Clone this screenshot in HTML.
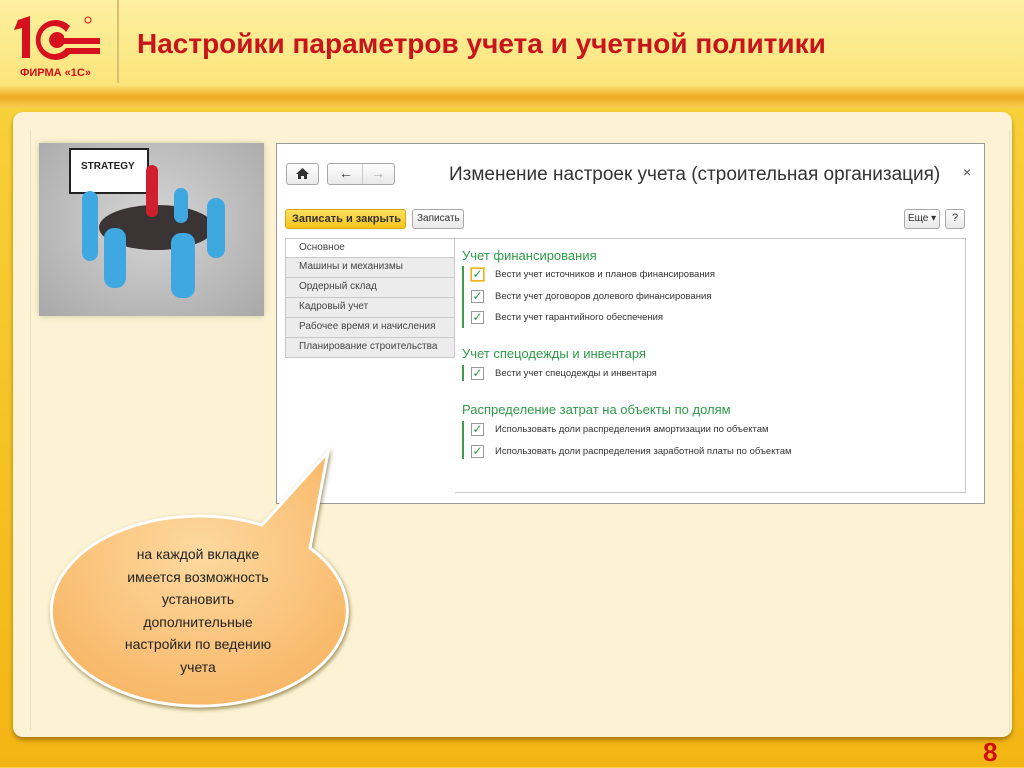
<!DOCTYPE html>
<html><head><meta charset="utf-8"><style>
*{margin:0;padding:0;box-sizing:border-box}
body{width:1024px;height:767px;overflow:hidden;position:relative;font-family:"Liberation Sans",sans-serif;background:linear-gradient(#f8d440,#f3b514)}
.hdr{position:absolute;left:0;top:0;width:1024px;height:88px;background:linear-gradient(#fdf0a0,#fbe47a)}
.band{position:absolute;left:0;top:86px;width:1024px;height:22px;background:linear-gradient(#f9df70,#eeaa20 50%,#f6cf50)}
.title{position:absolute;left:137px;top:28px;font-size:28px;font-weight:bold;color:#c8141c;white-space:nowrap}
.vsep{position:absolute;left:117px;top:0;width:2px;height:83px;background:#d8c070}
.panel{position:absolute;left:13px;top:112px;width:999px;height:625px;background:#fdf3d4;border-radius:10px;box-shadow:0 3px 4px rgba(120,80,0,.6)}
.inner{position:absolute;left:30px;top:130px;width:980px;height:600px;border-left:1px solid #e8dfc4;border-right:1px solid #e8dfc4}
.pic{position:absolute;left:39px;top:143px;width:225px;height:173px;background:radial-gradient(ellipse at 50% 45%,#d6d6d6,#a8a8a8);box-shadow:0 0 6px #c8c8a0}
.win{position:absolute;left:276px;top:143px;width:709px;height:361px;background:#fff;border:1px solid #9a9a9a}
.btn{position:absolute;border:1px solid #a8a8a8;border-radius:3px;background:linear-gradient(#fff,#e8e8e8);font-size:11px;color:#333}
.tabs{position:absolute;left:8px;top:94px;width:170px}
.tab{height:20px;border:1px solid #c8c8c8;border-top:none;background:#ececec;font-size:10px;color:#444;padding:3px 0 0 13px}
.tab.a{background:#fff;border-top:1px solid #c8c8c8}
.g{position:absolute;font-size:13px;color:#2e9a4a}
.cb{position:absolute;font-size:9.5px;color:#333}
.cb i{position:absolute;left:-24px;top:-1px;width:13px;height:13px;border:1px solid #999;background:#fff;font-style:normal;color:#2a9a40;font-size:12px;line-height:11px;text-align:center}
.bar{position:absolute;width:2px;background:#3aa050}
.num{position:absolute;left:983px;top:737px;font-size:26px;font-weight:bold;color:#d01010}
</style></head><body>
<div class="hdr"></div><div class="band"></div><div class="vsep"></div>
<svg style="position:absolute;left:10px;top:12px" width="100" height="70">
<path d="M8 8 L20 4 L20 46 L12 46 L12 16 L4 18 Z" fill="#d6101e"/>
<path d="M60 14 A20 20 0 1 0 60 42 L90 42 L90 36 L56 36 A14 14 0 1 1 56 20 Z" fill="#d6101e"/>
<path d="M54 24 A8 8 0 1 0 54 32 L90 32 L90 26 L54 26Z" fill="#d6101e"/>
<circle cx="78" cy="8" r="3" fill="none" stroke="#d6101e"/>
<text x="10" y="64" font-size="11" font-weight="bold" fill="#d6101e" font-family="Liberation Sans">ФИРМА «1С»</text>
</svg>
<div class="title">Настройки параметров учета и учетной политики</div>
<div class="panel"></div><div class="inner"></div>
<div class="pic">
<div style="position:absolute;left:30px;top:5px;width:80px;height:46px;background:#fff;border:2px solid #222"></div>
<div style="position:absolute;left:42px;top:18px;font-size:10px;font-weight:bold;color:#222">STRATEGY</div>
<div style="position:absolute;left:60px;top:62px;width:115px;height:45px;border-radius:50%;background:#3a3434"></div>
<div style="position:absolute;left:107px;top:22px;width:12px;height:52px;background:#d02030;border-radius:6px"></div>
<div style="position:absolute;left:43px;top:48px;width:16px;height:70px;background:#40a8e0;border-radius:8px"></div>
<div style="position:absolute;left:65px;top:85px;width:22px;height:60px;background:#40a8e0;border-radius:10px"></div>
<div style="position:absolute;left:132px;top:90px;width:24px;height:65px;background:#40a8e0;border-radius:10px"></div>
<div style="position:absolute;left:168px;top:55px;width:18px;height:60px;background:#40a8e0;border-radius:9px"></div>
<div style="position:absolute;left:135px;top:45px;width:14px;height:35px;background:#40a8e0;border-radius:7px"></div>
</div>
<div class="win">
<div class="btn" style="left:9px;top:19px;width:33px;height:22px"><svg width="31" height="20"><path d="M15.5 4 L22 10 L20 10 L20 15 L17 15 L17 12 L14 12 L14 15 L11 15 L11 10 L9 10 Z" fill="#333"/></svg></div>
<div class="btn" style="left:50px;top:19px;width:68px;height:22px;font-size:14px;line-height:19px"><span style="position:absolute;left:11px">←</span><span style="position:absolute;left:34px;top:0;height:20px;border-left:1px solid #ccc"></span><span style="position:absolute;left:43px;color:#aaa">→</span></div>
<div style="position:absolute;left:172px;top:20px;font-size:19px;color:#333;white-space:nowrap">Изменение настроек учета (строительная организация)</div>
<div style="position:absolute;left:686px;top:20px;font-size:14px;color:#555">×</div>
<div class="btn" style="left:8px;top:65px;width:121px;height:20px;background:linear-gradient(#ffe060,#f5c418);border-color:#d8a810;font-weight:bold;padding:3px 0 0 6px">Записать и закрыть</div>
<div class="btn" style="left:135px;top:65px;width:52px;height:20px;padding:3px 0 0 4px;font-size:10px">Записать</div>
<div class="btn" style="left:627px;top:65px;width:36px;height:20px;padding:3px 0 0 3px;font-size:10px">Еще ▾</div>
<div class="btn" style="left:668px;top:65px;width:20px;height:20px;text-align:center;padding-top:2px">?</div>
<div style="position:absolute;left:178px;top:94px;width:511px;height:255px;border:1px solid #c8c8c8;border-left:none"></div>
<div class="tabs">
<div class="tab a">Основное</div><div class="tab">Машины и механизмы</div><div class="tab">Ордерный склад</div><div class="tab">Кадровый учет</div><div class="tab">Рабочее время и начисления</div><div class="tab">Планирование строительства</div>
</div>
<div class="g" style="left:185px;top:104px">Учет финансирования</div>
<div class="bar" style="left:185px;top:122px;height:62px"></div>
<div class="cb" style="left:218px;top:125px"><i style="border-color:#f0b020;outline:1px solid #f8d060">✓</i>Вести учет источников и планов финансирования</div>
<div class="cb" style="left:218px;top:147px"><i>✓</i>Вести учет договоров долевого финансирования</div>
<div class="cb" style="left:218px;top:168px"><i>✓</i>Вести учет гарантийного обеспечения</div>
<div class="g" style="left:185px;top:202px">Учет спецодежды и инвентаря</div>
<div class="bar" style="left:185px;top:221px;height:16px"></div>
<div class="cb" style="left:218px;top:224px"><i>✓</i>Вести учет спецодежды и инвентаря</div>
<div class="g" style="left:185px;top:258px">Распределение затрат на объекты по долям</div>
<div class="bar" style="left:185px;top:277px;height:38px"></div>
<div class="cb" style="left:218px;top:280px"><i>✓</i>Использовать доли распределения амортизации по объектам</div>
<div class="cb" style="left:218px;top:302px"><i>✓</i>Использовать доли распределения заработной платы по объектам</div>
</div>
<svg style="position:absolute;left:0;top:0" width="1024" height="767">
<defs><radialGradient id="rg" cx="50%" cy="40%" r="60%"><stop offset="0" stop-color="#fdd9a0"/><stop offset="1" stop-color="#f8b868"/></radialGradient></defs>
<path d="M262 525 L328 452 L310 548 A148 95 0 1 1 262 525 Z" fill="url(#rg)" stroke="#fff" stroke-width="3" filter="drop-shadow(1px 2px 2px rgba(90,70,0,.6))"/>
</svg>
<div style="position:absolute;left:113px;top:543px;width:170px;text-align:center;font-size:14px;line-height:22.5px;color:#222">на каждой вкладке имеется возможность установить дополнительные настройки по ведению учета</div>
<div class="num">8</div>
</body></html>
